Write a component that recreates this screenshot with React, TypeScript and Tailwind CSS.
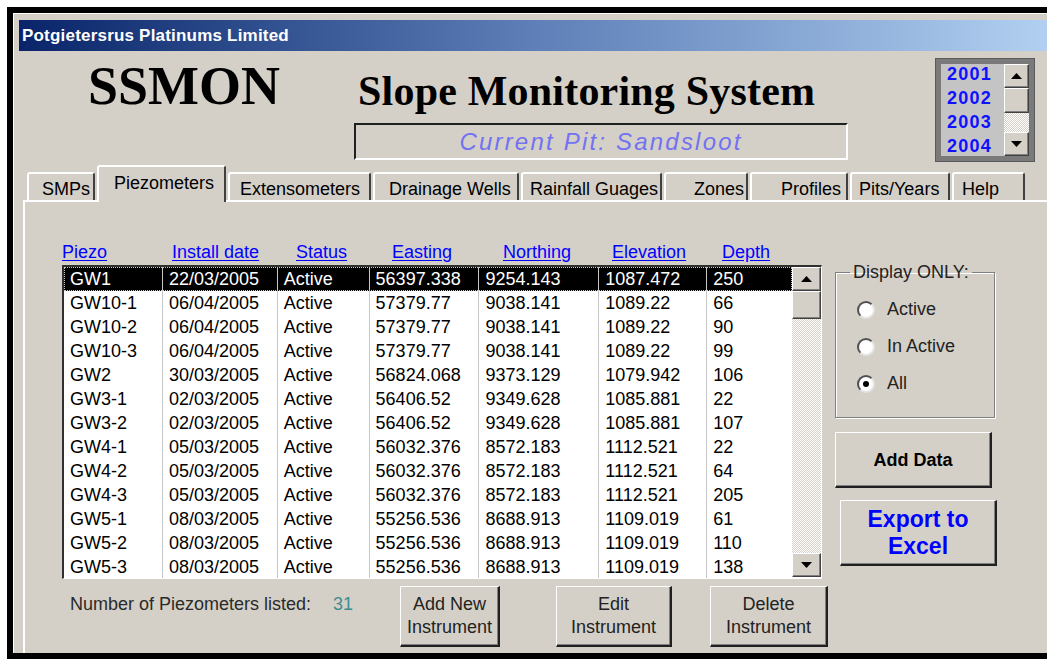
import React from "react";

const rows: string[][] = [
  ["GW1", "22/03/2005", "Active", "56397.338", "9254.143", "1087.472", "250"],
  ["GW10-1", "06/04/2005", "Active", "57379.77", "9038.141", "1089.22", "66"],
  ["GW10-2", "06/04/2005", "Active", "57379.77", "9038.141", "1089.22", "90"],
  ["GW10-3", "06/04/2005", "Active", "57379.77", "9038.141", "1089.22", "99"],
  ["GW2", "30/03/2005", "Active", "56824.068", "9373.129", "1079.942", "106"],
  ["GW3-1", "02/03/2005", "Active", "56406.52", "9349.628", "1085.881", "22"],
  ["GW3-2", "02/03/2005", "Active", "56406.52", "9349.628", "1085.881", "107"],
  ["GW4-1", "05/03/2005", "Active", "56032.376", "8572.183", "1112.521", "22"],
  ["GW4-2", "05/03/2005", "Active", "56032.376", "8572.183", "1112.521", "64"],
  ["GW4-3", "05/03/2005", "Active", "56032.376", "8572.183", "1112.521", "205"],
  ["GW5-1", "08/03/2005", "Active", "55256.536", "8688.913", "1109.019", "61"],
  ["GW5-2", "08/03/2005", "Active", "55256.536", "8688.913", "1109.019", "110"],
  ["GW5-3", "08/03/2005", "Active", "55256.536", "8688.913", "1109.019", "138"],
];

const colWidths = [
  "w-[99px]",
  "w-[115px]",
  "w-[92px]",
  "w-[110px]",
  "w-[120px]",
  "w-[108px]",
  "w-[85px]",
];

const headers: [string, string][] = [
  ["Piezo", "w-[110px]"],
  ["Install date", "w-[124px]"],
  ["Status", "w-[96px]"],
  ["Easting", "w-[111px]"],
  ["Northing", "w-[109px]"],
  ["Elevation", "w-[110px]"],
  ["Depth", "w-[60px]"],
];

const tabs: { label: string; w: string; pl: string; active?: boolean }[] = [
  { label: "SMPs", w: "w-[68px]", pl: "pl-[13px]" },
  { label: "Piezometers", w: "w-[129px]", pl: "pl-[15px]", active: true },
  { label: "Extensometers", w: "w-[143px]", pl: "pl-[10px]" },
  { label: "Drainage Wells", w: "w-[146px]", pl: "pl-[14px]" },
  { label: "Rainfall Guages", w: "w-[141px]", pl: "pl-[7px]" },
  { label: "Zones", w: "w-[84px]", pl: "pl-[28px]" },
  { label: "Profiles", w: "w-[98px]", pl: "pl-[29px]" },
  { label: "Pits/Years", w: "w-[100px]", pl: "pl-[7px]" },
  { label: "Help", w: "w-[73px]", pl: "pl-[8px]" },
];

function ArrowUp() {
  return (
    <svg width="11" height="6" viewBox="0 0 11 6">
      <path d="M5.5 0 L11 6 L0 6 Z" fill="#000" />
    </svg>
  );
}

function ArrowDown() {
  return (
    <svg width="11" height="6" viewBox="0 0 11 6">
      <path d="M0 0 L11 0 L5.5 6 Z" fill="#000" />
    </svg>
  );
}

// classic 3D scroll button face
const scrollBtn =
  "bg-[#d4d0c8] border border-t-white border-l-white border-r-[#404040] border-b-[#404040] shadow-[inset_-1px_-1px_0_#808080] flex items-center justify-center";

const dotted =
  "bg-[image:repeating-conic-gradient(#ffffff_0%_25%,#d4d0c8_0%_50%)] [background-size:2px_2px]";

// classic push button with heavy dark lower-right edge
const pushBtn =
  "bg-[#d4d0c8] border-t border-l border-t-white border-l-white border-b-2 border-r-2 border-b-[#202020] border-r-[#202020] shadow-[inset_-1px_-1px_0_#808080] flex flex-col items-center justify-center";

function Radio({ label, checked }: { label: string; checked?: boolean }) {
  return (
    <div className="h-[37px] flex items-center gap-[12px]">
      <div className="w-[18px] h-[18px] rounded-full bg-white border-2 border-t-[#505050] border-l-[#505050] border-r-[#e4e4e4] border-b-[#e4e4e4] flex items-center justify-center">
        {checked && <div className="w-[6px] h-[6px] rounded-full bg-black" />}
      </div>
      <span className="text-[18px] leading-[21px] text-[#222]">{label}</span>
    </div>
  );
}

export default function App() {
  return (
    <div className="w-[1047px] h-[659px] bg-white overflow-hidden pt-[7px] pl-[7px] font-['Liberation_Sans',Arial,sans-serif] text-black">
      <div className="w-[1060px] h-[652px] border-[6px] border-black bg-[#d4d0c8] pt-[7px] pl-[6px] flex flex-col shadow-[inset_1px_1px_0_#ffffff]">
        {/* window caption */}
        <div className="h-[31px] shrink-0 bg-linear-to-r from-[#0a246a] via-[#5f80b8] to-[#b4d2f2] flex items-center pl-[3px]">
          <span className="text-white font-bold text-[17px] leading-none tracking-[0.2px]">
            Potgietersrus Platinums Limited
          </span>
        </div>

        {/* heading band */}
        <div className="h-[114px] shrink-0 flex items-start">
          <div className="w-[335px] pl-[69px] pt-[7.5px]">
            <span className="font-['Liberation_Serif','Times_New_Roman',serif] font-bold text-[54px] leading-none">
              SSMON
            </span>
          </div>
          <div className="w-[494px] flex flex-col">
            <div className="pl-[4px] pt-[19px] h-[61px] font-['Liberation_Serif','Times_New_Roman',serif] font-bold text-[42px] leading-[42px] tracking-[0.2px]">
              Slope Monitoring System
            </div>
            <div className="mt-[11px] h-[37px] border-t-2 border-l-2 border-t-[#202020] border-l-[#202020] border-b-2 border-r-2 border-b-white border-r-white flex items-center justify-center">
              <span className="italic text-[24px] leading-none tracking-[2.2px] text-[#7272f2]">
                Current Pit: Sandsloot
              </span>
            </div>
          </div>
          <div className="ml-[87px] mt-[7px] w-[100px] h-[104px] bg-[#7a7a7a] p-[5px] flex border border-[#5a5a5a]">
            <div className="w-[63px] h-full bg-[#c4c4c4] pl-[6px] overflow-hidden">
              <div className="-mt-[2px]">
                {["2001", "2002", "2003", "2004"].map((y) => (
                  <div key={y} className="h-[24px] leading-[24px] text-[#1010ff] font-bold text-[18px] tracking-[1.2px]">
                    {y}
                  </div>
                ))}
              </div>
            </div>
            <div className="w-[25px] h-full flex flex-col">
              <div className={`h-[24px] ${scrollBtn}`}>
                <ArrowUp />
              </div>
              <div className={`h-[25px] ${scrollBtn}`} />
              <div className={`h-[19px] ${dotted}`} />
              <div className={`h-[24px] ${scrollBtn}`}>
                <ArrowDown />
              </div>
            </div>
          </div>
        </div>

        {/* tab strip */}
        <div className="h-[35px] shrink-0 flex items-end pl-[8px] gap-[2px]">
          {tabs.map((t) =>
            t.active ? (
              <div
                key={t.label}
                className={`${t.w} ${t.pl} relative z-10 -mb-[2px] h-[37px] bg-[#d4d0c8] border-t-2 border-l-2 border-white border-r-2 border-r-[#404040] rounded-t-[3px] pt-[6px] text-[18px] leading-[21px]`}
              >
                {t.label}
              </div>
            ) : (
              <div
                key={t.label}
                className={`${t.w} ${t.pl} h-[28px] border-t-2 border-l-2 border-white border-r-2 border-r-[#404040] rounded-t-[3px] pt-[5px] text-[18px] leading-[21px]`}
              >
                {t.label}
              </div>
            )
          )}
        </div>

        {/* tab page */}
        <div className="ml-[4px] flex-1 border-t-2 border-l-2 border-white flex flex-col">
          {/* column headings */}
          <div className="mt-[40px] pl-[37px] flex h-[21px]">
            {headers.map(([h, w]) => (
              <div key={h} className={`${w} text-[18px] leading-[21px] text-[#0000ff] underline underline-offset-[2px]`}>
                {h}
              </div>
            ))}
          </div>

          <div className="mt-[2px] flex items-start">
            {/* list box */}
            <div className="ml-[37px] w-[760px] h-[314px] bg-white border-t-2 border-l-2 border-t-[#303030] border-l-[#303030] border-b border-r border-b-white border-r-white flex">
              <div className="w-[729px] h-full overflow-hidden">
                {rows.map((r, i) => (
                  <div
                    key={r[0]}
                    className={
                      i === 0
                        ? "h-[24px] flex bg-black text-white outline-1 outline-dotted outline-[#c8c8c8] -outline-offset-1"
                        : "h-[24px] flex"
                    }
                  >
                    {r.map((c, j) => (
                      <div
                        key={j}
                        className={`${colWidths[j]} ${j < 6 ? "border-r border-r-[#c8c8c8]" : ""} pl-[6px] text-[18px] leading-[24px] whitespace-nowrap`}
                      >
                        {c}
                      </div>
                    ))}
                  </div>
                ))}
                <div className="h-[10px] flex">
                  {colWidths.map((w, j) => (
                    <div key={j} className={`${w} ${j < 6 ? "border-r border-r-[#c8c8c8]" : ""}`} />
                  ))}
                </div>
              </div>
              <div className="w-[29px] h-full flex flex-col pb-[1px]">
                <div className={`h-[24px] shrink-0 ${scrollBtn}`}>
                  <ArrowUp />
                </div>
                <div className={`h-[28px] shrink-0 ${scrollBtn}`} />
                <div className={`flex-1 ${dotted}`} />
                <div className={`h-[24px] shrink-0 ${scrollBtn}`}>
                  <ArrowDown />
                </div>
              </div>
            </div>

            {/* filter and actions */}
            <div className="ml-[13px] w-[164px] flex flex-col -mt-[3px]">
              <fieldset className="w-[160px] h-[156px] border border-[#808080] shadow-[inset_1px_1px_0_#ffffff,1px_1px_0_#ffffff]">
                <legend className="ml-[14px] px-[3px] text-[18px] leading-[21px] text-[#222]">
                  Display ONLY:
                </legend>
                <div className="mt-[8px] pl-[21px]">
                  <Radio label="Active" />
                  <Radio label="In Active" />
                  <Radio label="All" checked />
                </div>
              </fieldset>
              <div className={`mt-[14px] w-[157px] h-[56px] ${pushBtn}`}>
                <span className="font-bold text-[18px] leading-none">Add Data</span>
              </div>
              <div className={`mt-[12px] ml-[5px] w-[157px] h-[66px] ${pushBtn}`}>
                <span className="font-bold text-[23px] leading-[27px] text-[#0000ff] text-center">
                  Export to
                  <br />
                  Excel
                </span>
              </div>
            </div>
          </div>

          {/* footer */}
          <div className="mt-[7px] flex items-start">
            <div className="w-[375px] pl-[45px] pt-[8px] flex text-[18px] leading-[21px]">
              <span className="text-[#2a2a2a]">Number of Piezometers listed:</span>
              <span className="ml-[22px] text-[#3e8e8e]">31</span>
            </div>
            <div className={`w-[100px] h-[61px] ${pushBtn}`}>
              <span className="text-[18px] leading-[23px] text-center text-[#222]">
                Add New
                <br />
                Instrument
              </span>
            </div>
            <div className={`ml-[56px] w-[116px] h-[61px] ${pushBtn}`}>
              <span className="text-[18px] leading-[23px] text-center text-[#222]">
                Edit
                <br />
                Instrument
              </span>
            </div>
            <div className={`ml-[38px] w-[118px] h-[61px] ${pushBtn}`}>
              <span className="text-[18px] leading-[23px] text-center text-[#222]">
                Delete
                <br />
                Instrument
              </span>
            </div>
          </div>
        </div>
      </div>
    </div>
  );
}
